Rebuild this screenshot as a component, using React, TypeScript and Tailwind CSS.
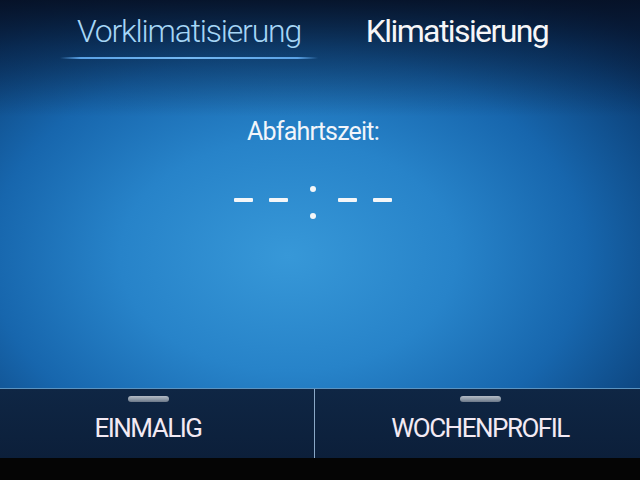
import React from "react";

const Dash = () => <div className="w-[19px] h-[4px] bg-[#f4f6f8] rounded-[1px]" />;

export default function App() {
  return (
    <div className="w-[640px] h-[480px] flex flex-col bg-[#050505] overflow-hidden" style={{ fontFamily: "Roboto, 'Noto Sans', sans-serif" }}>
      <div className="h-[388px] flex flex-col bg-[image:linear-gradient(180deg,rgba(6,16,36,0.92)_0%,rgba(6,20,45,0.55)_12%,rgba(6,20,45,0)_30%),radial-gradient(ellipse_75%_85%_at_45%_66%,#3798d8_0%,#2783c9_35%,#1766ad_62%,#0d457f_85%,#0a2c57_100%)]">
        <div className="flex pl-[60px] gap-[10px] pt-[15px]">
          <div className="w-[258px] flex flex-col items-center">
            <div className="text-[32px] leading-none font-light text-[#a6d6f6] tracking-[-1.2px] h-[32px]">Vorklimatisierung</div>
            <div className="mt-[10px] w-full h-[2px] bg-[linear-gradient(90deg,rgba(90,160,230,0),#5aa2e6_8%,#74b8f2_50%,#5aa2e6_92%,rgba(90,160,230,0))]" />
          </div>
          <div className="w-[258px] flex flex-col items-center">
            <div className="text-[32px] leading-none font-normal text-[#f6f6f8] tracking-[-1.6px] h-[32px]">Klimatisierung</div>
          </div>
        </div>
        <div className="flex flex-col items-center pt-[60px] pr-[14px]">
          <div className="text-[25px] leading-none text-[#f2f5fa] tracking-[-0.8px] h-[25px]">Abfahrtszeit:</div>
          <div className="flex items-start mt-[42px]">
            <div className="mt-[12px]"><Dash /></div>
            <div className="mt-[12px] ml-[16px]"><Dash /></div>
            <div className="ml-[22px] flex flex-col items-center gap-[21px]">
              <div className="w-[6px] h-[6px] rounded-full bg-[#f4f6f8]" />
              <div className="w-[6px] h-[6px] rounded-full bg-[#f4f6f8]" />
            </div>
            <div className="mt-[12px] ml-[22px]"><Dash /></div>
            <div className="mt-[12px] ml-[16px]"><Dash /></div>
          </div>
        </div>
      </div>
      <div className="h-[1px] bg-[#5b93c0]" />
      <div className="h-[69px] flex bg-[linear-gradient(180deg,#0f2644_0%,#0c1f3a_100%)]">
        <div className="w-[314px] flex flex-col items-center pr-[18px] pt-[7px]">
          <div className="w-[41px] h-[6px] rounded-full bg-[linear-gradient(180deg,#b4bcc6_0%,#8a96a4_60%,#6c7888_100%)]" />
          <div className="mt-[13px] text-[26px] leading-none text-[#f3eaf3] tracking-[-1.5px]">EINMALIG</div>
        </div>
        <div className="w-[1px] bg-[#8aa8c6]" />
        <div className="flex-1 flex flex-col items-center pl-[5px] pt-[7px]">
          <div className="w-[41px] h-[6px] rounded-full bg-[linear-gradient(180deg,#b4bcc6_0%,#8a96a4_60%,#6c7888_100%)]" />
          <div className="mt-[13px] text-[26px] leading-none text-[#f3eaf3] tracking-[-1.5px]">WOCHENPROFIL</div>
        </div>
      </div>
      <div className="flex-1 bg-[#050505]" />
    </div>
  );
}
